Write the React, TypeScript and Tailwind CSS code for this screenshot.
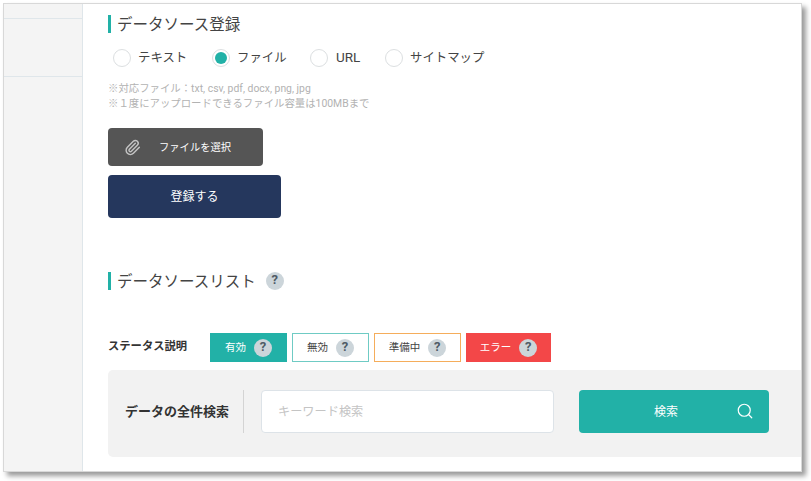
import { Paperclip, Search } from 'lucide-react';

const font = { fontFamily: 'Roboto, "Noto Sans CJK JP", sans-serif' };

function Help({ size = 'w-[18px] h-[18px] text-[13px]' }: { size?: string }) {
  return (
    <span className={`${size} rounded-full bg-[#ccd5da] text-[#4f5b66] font-bold flex items-center justify-center shrink-0 pb-[2px]`}>?</span>
  );
}

function Heading({ children }: { children: React.ReactNode }) {
  return (
    <h2 className="border-l-[3px] border-[#22b1a7] pl-[6px] h-[18px] flex items-center text-[15.5px] leading-none text-[#444] font-normal">
      <span className="translate-y-[2px]">{children}</span>
    </h2>
  );
}

const radios = [
  { label: 'テキスト', width: 'w-[99px]', text: 'text-[12.4px]' },
  { label: 'ファイル', width: 'w-[98px]', text: 'text-[12.4px]', checked: true },
  { label: 'URL', width: 'w-[75px]', text: 'text-[13.5px] pl-[1px] -translate-y-[1px]' },
  { label: 'サイトマップ', width: 'w-[110px]', text: 'text-[12.4px]' },
];

const chips = [
  { label: '有効', box: 'w-[77px] bg-[#22b1a7] border-[#22b1a7] text-white' },
  { label: '無効', box: 'w-[77px] bg-white border-[#6fcbc4] text-[#444]' },
  { label: '準備中', box: 'w-[87px] bg-white border-[#f5ad5b] text-[#444]' },
  { label: 'エラー', box: 'w-[85px] bg-[#f34748] border-[#f34748] text-white' },
];

export default function App() {
  return (
    <div className="w-[811px] h-[481px] bg-white overflow-hidden pt-[3px] pl-[3px]" style={font}>
      <div className="w-[799px] h-[469px] flex bg-white border border-[#d8d8d8] shadow-[4px_4px_5px_rgba(0,0,0,0.4)] overflow-hidden">
        <aside className="w-[79px] shrink-0 bg-[#f4f4f4] border-r border-[#dfe6ea]">
          <div className="h-[15px] border-b border-[#dfe6ea]" />
          <div className="h-[58px] border-b border-[#dfe6ea]" />
        </aside>

        <main className="flex-1 min-w-0 pl-[25px] pt-[11px]">
          <Heading>データソース登録</Heading>

          <div className="flex items-center mt-[16px] ml-[5px] h-[18px]">
            {radios.map((r) => (
              <label key={r.label} className={`${r.width} flex items-center gap-[7px] text-[#444] shrink-0`}>
                <span className="w-[18px] h-[18px] rounded-full bg-white border border-[#dcdfe1] flex items-center justify-center">
                  {r.checked && <span className="w-[12px] h-[12px] rounded-full bg-[#22b1a7]" />}
                </span>
                <span className={r.text}>{r.label}</span>
              </label>
            ))}
          </div>

          <div className="mt-[14px] text-[10.4px] leading-[15px] text-[#b2b2b2]">
            <p>※対応ファイル：txt, csv, pdf, docx, png, jpg</p>
            <p>※１度にアップロードできるファイル容量は100MBまで</p>
          </div>

          <button className="mt-[17px] w-[155px] h-[38px] bg-[#555] rounded-[4px] flex items-center text-white text-[10.3px] pl-[16px]">
            <Paperclip size={17} className="text-[#c4c4c4]" />
            <span className="ml-[18px] translate-y-[1px]">ファイルを選択</span>
          </button>
          <button className="block mt-[9px] w-[173px] h-[43px] bg-[#25375d] rounded-[4px] text-white text-[12px]">
            登録する
          </button>

          <div className="flex items-center gap-[10px] mt-[54px]">
            <Heading>データソースリスト</Heading>
            <Help />
          </div>

          <div className="flex items-center mt-[43px]">
            <span className="w-[102px] text-[11.3px] font-bold text-[#333]">ステータス説明</span>
            <div className="flex gap-[5px]">
              {chips.map((c) => (
                <div key={c.label} className={`${c.box} h-[29px] border flex items-center justify-center gap-[8px] text-[10.5px]`}>
                  <span>{c.label}</span>
                  <Help />
                </div>
              ))}
            </div>
          </div>

          <div className="mt-[8px] h-[87px] bg-[#f2f2f2] rounded-l-[5px] flex items-center pl-[17px] pb-[4px]">
            <span className="w-[119px] h-[43px] flex items-center border-r border-[#d4d4d4] text-[13px] font-bold text-[#333] shrink-0">
              データの全件検索
            </span>
            <input
              readOnly
              placeholder="キーワード検索"
              className="ml-[17px] w-[293px] h-[43px] bg-white border border-[#dde3e8] rounded-[4px] px-[16px] text-[12.2px] placeholder:text-[#c4c4c4] outline-none"
            />
            <button className="relative ml-[25px] w-[190px] h-[43px] bg-[#22b1a7] rounded-[4px] text-white text-[12px] flex items-center justify-center pr-[16px]">
              <span>検索</span>
              <Search size={18} strokeWidth={1.6} className="absolute right-[15px] top-[12px]" />
            </button>
          </div>
        </main>
      </div>
    </div>
  );
}
